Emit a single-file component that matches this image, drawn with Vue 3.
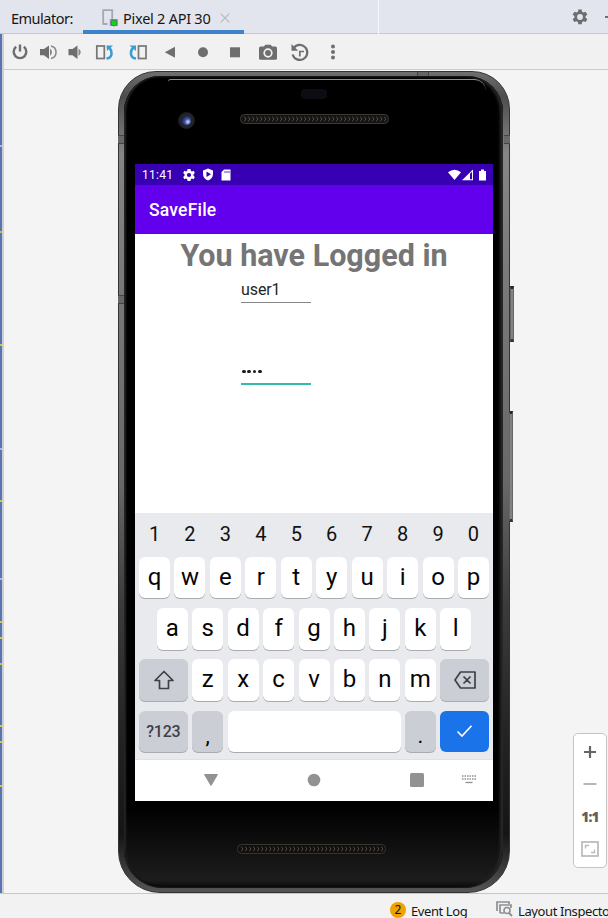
<script setup>
const numbers = '1234567890'.split('')
const rowOne = 'qwertyuiop'.split('')
const rowTwo = 'asdfghjkl'.split('')
const rowThree = 'zxcvbnm'.split('')
const marks = [
  { y: 111, c: '#aeb8dc' }, { y: 197, c: '#c9be3c' }, { y: 310, c: '#d8c72c' }, { y: 414, c: '#aeb8dc' },
  { y: 466, c: '#d8c72c' }, { y: 544, c: '#aeb8dc' }, { y: 587, c: '#d8c72c' }, { y: 603, c: '#d8c72c' },
  { y: 629, c: '#d8c72c' }, { y: 691, c: '#d8c72c' }, { y: 707, c: '#d8c72c' }, { y: 751, c: '#d8c72c' },
]
</script>

<template>
  <div class="window">
    <header class="tabs">
      <span class="title">Emulator:</span>
      <div class="tab">
        <svg class="device" width="17" height="18" viewBox="0 0 17 18">
          <path d="M1.2 14.5V1.2h9V11" fill="none" stroke="#a4a9b0" stroke-width="1.8" />
          <path d="M.5 14h5v2h-5z" fill="#a4a9b0" />
          <rect x="7.8" y="10" width="8" height="7" fill="#9a83b8" />
          <circle cx="12" cy="14" r="3" fill="#10d51b" stroke="#24852b" stroke-width=".7" />
        </svg>
        <span class="tab-name">Pixel 2 API 30</span>
        <svg class="close" width="10" height="10" viewBox="0 0 10 10"><path d="M.7.7l8.6 8.6M9.3.7L.7 9.3" stroke="#b5b9c1" stroke-width="1.2" /></svg>
      </div>
      <div class="divider"></div>
      <svg class="gear" width="16" height="16" viewBox="2 1.300 20 20"><path fill="#6c6e71" fill-rule="evenodd" d="M9.9 2h4.2l.5 2.8 1.8 1 2.7-1 2.1 3.6-2.2 1.8v2.1l2.2 1.8-2.1 3.6-2.7-1-1.8 1-.5 2.8H9.9l-.5-2.800-1.800-1-2.700 1-2.100-3.600L5 12.300v-2.100L2.800 8.400l2.100-3.600 2.700 1 1.800-1zM12 7.600a3.700 3.700 0 1 0 0 7.400 3.700 3.700 0 0 0 0-7.400z" /></svg>
      <svg class="minimize" width="4" height="4" viewBox="0 0 4 4"><path d="M1 2h3" stroke="#6c6e71" stroke-width="2" /></svg>
    </header>

    <main class="body">
      <div class="strip">
        <i v-for="m in marks" :key="m.y" class="mark" :style="{ top: m.y + 'px', background: m.c }"></i>
      </div>
      <section class="panel">
        <nav class="toolbar">
          <svg viewBox="0 0 20 20"><path d="M6.200 4.800a6.300 6.300 0 1 0 7.600 0M10 2.500v7" fill="none" stroke="#6c6e70" stroke-width="2.400" /></svg>
          <svg viewBox="0 0 20 20"><path d="M1 7h4L10 3.500V17L5 13.200H1z" fill="#6c6e70" /><path d="M11 6.500q4 3.500 0 7.500z" fill="#858789" /><path d="M12 4a6.400 6.400 0 0 1 0 12.500" fill="none" stroke="#858789" stroke-width="1.500" /></svg>
          <svg viewBox="0 0 20 20"><path d="M3.500 7h4l5-3.500V17l-5-3.800h-4z" fill="#6c6e70" /><path d="M13.500 6.500q4.500 3.500 0 7.500z" fill="#858789" /></svg>
          <svg viewBox="0 0 20 20"><rect x="1.800" y="4" width="7.500" height="12.500" fill="none" stroke="#747678" stroke-width="1.700" /><path d="M11.500 16.500c7-1 5.500-8 3-10.500" fill="none" stroke="#3a9cd3" stroke-width="2.500" /><path d="M11.500 3.500h6.500L12 9z" fill="#3a9cd3" /></svg>
          <svg viewBox="0 0 20 20"><rect x="10.500" y="4" width="7.500" height="12.500" fill="none" stroke="#747678" stroke-width="1.700" /><path d="M8 16.500c-7-1-5.500-8-3-10.500" fill="none" stroke="#3a9cd3" stroke-width="2.500" /><path d="M8 3.500v5.500L1.500 3.500z" fill="#3a9cd3" /></svg>
          <svg viewBox="0 0 20 20"><path d="M4.800 10.200L15 4.700v11z" fill="#6c6e70" /></svg>
          <svg viewBox="0 0 20 20"><circle cx="10" cy="10.200" r="5" fill="#6c6e70" /></svg>
          <svg viewBox="0 0 20 20"><rect x="5" y="5.300" width="10" height="10" fill="#6c6e70" /></svg>
          <svg viewBox="0 0 20 20"><rect x="1" y="4.500" width="18" height="13.300" rx="1.500" fill="#6c6e70" /><path d="M5.500 5L7.300 2.700h5.400L14.500 5z" fill="#6c6e70" /><circle cx="10" cy="11" r="3.800" fill="#6c6e70" stroke="#f2f2f2" stroke-width="1.700" /></svg>
          <svg viewBox="0 0 20 20"><path d="M3.400 6.500a7.500 7.500 0 1 1-.8 6" fill="none" stroke="#6c6e70" stroke-width="2.200" /><path d="M1.500 2v6.700h6.700z" fill="#6c6e70" /><path d="M14 9.500H9.800v5" fill="none" stroke="#6c6e70" stroke-width="1.700" /></svg>
          <svg viewBox="0 0 20 20"><g fill="#6c6e70"><circle cx="10" cy="4.500" r="2" /><circle cx="10" cy="10" r="2" /><circle cx="10" cy="15.500" r="2" /></g></svg>
        </nav>

        <div class="stage">
          <div class="phone">
            <i class="seam top"></i><i class="seam left"></i><i class="seam mid"></i><i class="seam right"></i>
            <i class="button power"></i><i class="button volume"></i>
            <div class="glass">
              <i class="shine"></i>
              <div class="forehead">
                <div class="camera"><i></i></div>
                <div class="sensor"></div>
                <svg class="speaker" width="149" height="10">
                  <defs><pattern id="mesh" width="4" height="10" patternUnits="userSpaceOnUse"><path d="M0 2.500l2 2.500-2 2.500" fill="none" stroke="#5b544b" stroke-width=".9" /></pattern></defs>
                  <rect x=".5" y=".5" width="148" height="9" rx="4" fill="#151412" stroke="#3e3933" /><rect x="3" y="1" width="143" height="8" fill="url(#mesh)" />
                </svg>
              </div>

              <div class="screen">
                <div class="status">
                  <span class="clock">11:41</span>
                  <svg width="12" height="12" viewBox="2 2 20 20"><path fill="#fff" fill-rule="evenodd" d="M9.500 2h5l.5 3 2 1 2.700-1 2 3.800-2.200 2v2.400l2.200 2-2 3.800-2.700-1-2 1-.5 3h-5L9 19l-2-1-2.700 1-2-3.800 2.200-2v-2.400l-2.200-2L4.300 5 7 6l2-1zM12 8.500a3.500 3.500 0 1 0 0 7 3.500 3.500 0 0 0 0-7z" /></svg>
                  <svg width="12" height="13" viewBox="0 0 12 13"><path d="M6 .5L11 2.500V6c0 3-2 5.500-5 6.500C3 11.500 1 9 1 6V2.500z" fill="#fff" /><path d="M4.500 3.500v5.400L9 6.200z" fill="#3700b3" /></svg>
                  <svg width="10" height="12" viewBox="0 0 10 12"><path d="M3 .5h6.500v11H.5V3z" fill="#fff" /><path d="M4 2v2M6 2v2M8 2v2" stroke="#3700b3" stroke-width=".8" /></svg>
                  <svg class="signals" width="39" height="12" viewBox="0 0 39 12"><g fill="#fff"><path d="M0 3.300Q6.500-2 13 3.300L6.500 11z" /><path d="M14 11.200L25 .5v10.700z" /><path d="M31 2h2V.5h3V2h2v9.500h-7z" /></g><path d="M22 4.800L24 2.800v7.400h-2z" fill="#3700b3" /></svg>
                </div>
                <div class="appbar">SaveFile</div>
                <div class="content">
                  <h1>You have Logged in</h1>
                  <div class="field">user1</div>
                  <div class="field secret"><i v-for="n in 4" :key="n"></i></div>
                </div>
                <div class="keyboard">
                  <div class="row digits"><span v-for="k in numbers" :key="k">{{ k }}</span></div>
                  <div class="row"><span v-for="k in rowOne" :key="k" class="key">{{ k }}</span></div>
                  <div class="row"><span v-for="k in rowTwo" :key="k" class="key">{{ k }}</span></div>
                  <div class="row">
                    <span class="key gray wide"><svg width="22" height="22" viewBox="0 0 22 22"><path d="M11 2.500L2 11.500h4.500v8h9v-8H20z" fill="none" stroke="#3e4146" stroke-width="1.700" stroke-linejoin="round" /></svg></span>
                    <span v-for="k in rowThree" :key="k" class="key">{{ k }}</span>
                    <span class="key gray wide"><svg width="22" height="20" viewBox="0 0 22 20"><path d="M6.500 2H21v16H6.500L1 10zM9.500 6.500l7 7M16.500 6.500l-7 7" fill="none" stroke="#3e4146" stroke-width="1.700" stroke-linejoin="round" /></svg></span>
                  </div>
                  <div class="row">
                    <span class="key gray wide sym">?123</span>
                    <span class="key gray punct">,</span>
                    <span class="key space"></span>
                    <span class="key gray punct">.</span>
                    <span class="key wide enter"><svg width="17" height="14" viewBox="0 0 17 14"><path d="M1.500 7.500L6 12 15.500 1.800" fill="none" stroke="#fff" stroke-width="1.600" /></svg></span>
                  </div>
                </div>
                <div class="navbar">
                  <svg width="16" height="14" viewBox="0 0 16 14"><path d="M1.500 1.500h13L8 12.500z" fill="#929292" stroke="#929292" stroke-linejoin="round" /></svg>
                  <svg width="14" height="14" viewBox="0 0 14 14"><circle cx="7" cy="7" r="6.300" fill="#929292" /></svg>
                  <svg width="14" height="14" viewBox="0 0 14 14"><rect width="14" height="14" rx="1.500" fill="#929292" /></svg>
                  <svg width="14" height="9" viewBox="0 0 14 9"><path d="M0 1h14M0 4h14" stroke="#8e8e8e" stroke-width="1.500" stroke-dasharray="1.500 1" /><path d="M3.500 7.500h7" stroke="#8e8e8e" stroke-width="1.300" /></svg>
                </div>
              </div>

              <div class="chin">
                <svg width="149" height="10"><rect x=".5" y=".5" width="148" height="9" rx="4" fill="#11100f" stroke="#38342f" /><rect x="3" y="1" width="143" height="8" fill="url(#mesh)" /></svg>
              </div>
            </div>
          </div>

          <div class="zoom">
            <svg width="14" height="14" viewBox="0 0 14 14"><path d="M1 7h12M7 1v12" stroke="#666" stroke-width="2.200" /></svg>
            <svg width="14" height="14" viewBox="0 0 14 14"><path d="M.500 7h13" stroke="#b6b6b6" stroke-width="2" /></svg>
            <span>1:1</span>
            <svg width="18" height="16" viewBox="0 0 18 16"><rect x="1" y="1" width="16" height="14" fill="none" stroke="#b9b9b9" stroke-width="1.700" /><path d="M4.500 7.500V4.500H8M13.500 8.500v3H10" fill="none" stroke="#b9b9b9" stroke-width="1.300" /></svg>
          </div>
        </div>
      </section>
    </main>

    <footer class="footer">
      <span class="badge">2</span>
      <span class="log">Event Log</span>
      <svg width="17" height="16" viewBox="0 0 17 16"><path d="M1 10V1h12v2M4 12V4h11v3M4 12h4" fill="none" stroke="#8d9094" stroke-width="1.700" /><circle cx="11" cy="9.500" r="3" fill="none" stroke="#8d9094" stroke-width="1.600" /><path d="M13 12l3 3" stroke="#8d9094" stroke-width="2" /></svg>
      <span class="inspector">Layout Inspector</span>
    </footer>
  </div>
</template>

<style>
body { margin: 0; overflow: hidden; }
</style>

<style scoped>
* { box-sizing: border-box; }
i { display: block; }
svg { display: block; flex: none; }
.window { width: 608px; height: 918px; overflow: hidden; display: flex; flex-direction: column; background: #f2f2f2; font-family: "Noto Sans", "Open Sans", sans-serif; font-size: 14.500px; color: #161616; }
.tabs { height: 34px; flex: none; display: flex; background: #e2e5ed; border-bottom: 1px solid #c6c8d0; align-items: center; }
.title { width: 83px; padding-left: 11px; white-space: nowrap; letter-spacing: -.5px; padding-top: 2px; }
.tab { width: 161px; height: 34px; margin-bottom: -1px; border-bottom: 4px solid #3e82c9; display: flex; align-items: center; padding: 5px 0 0 19px; flex: none; }
.device { margin-right: 4px; }
.tab-name { width: 94px; white-space: nowrap; letter-spacing: -.25px; }
.close { margin-left: 3px; }
.divider { width: 135px; height: 34px; border-right: 1px solid #f5f6f9; }
.gear { margin-left: 193px; }
.minimize { margin-left: auto; }
.body { height: 860px; flex: none; display: flex; border-bottom: 1px solid #c8c8c8; }
.strip { position: relative; width: 4px; background: #5874b1; border-right: 2px solid #cdcfd4; }
.mark { position: absolute; left: 0; width: 2px; height: 2px; }
.panel { flex: 1; background: #f4f4f4; }
.toolbar { height: 36px; display: flex; align-items: center; background: #f1f1f1; border-bottom: 1px solid #cbcbcb; padding-left: 6px; }
.toolbar svg { width: 20px; height: 20px; }
.toolbar svg:nth-child(2) { margin-left: 9px; }
.toolbar svg:nth-child(3) { margin-left: 6px; }
.toolbar svg:nth-child(4) { margin-left: 10px; }
.toolbar svg:nth-child(5) { margin-left: 13px; }
.toolbar svg:nth-child(6) { margin-left: 12px; }
.toolbar svg:nth-child(n+7) { margin-left: 12.500px; }
.stage { height: 823px; padding: 1px 1px 0 114px; display: flex; align-items: flex-start; }
.phone { position: relative; width: 392px; height: 822px; flex: none; padding: 4px 6px 4px 5px; border-radius: 38px 38px 42px 42px; background: linear-gradient(#6d6f6f 0, #4c4e4e 3%, #858585 10%, #767676 30%, #686868 50%, #3b3b3b 65%, #242424 80%, #151515 93%, #555 100%); border: 1px solid #333; }
.glass { position: relative; height: 100%; border-radius: 36px 36px 38px 38px; background: linear-gradient(#000 90%, #1d1d1d 99%, #080808); padding: 88px 0 0 11px; box-shadow: inset 2px 0 2px #252525, inset -3px 0 3px #292929, inset 0 0 0 2px #050505; }
.shine { position: absolute; left: 44px; right: 17px; top: 3px; height: 12px; border-top: 1.500px solid #8c9292; border-radius: 6px 26px 0 0; }
.forehead { position: absolute; left: 0; top: 0; width: 100%; }
.camera { position: absolute; left: 54px; top: 36px; width: 17px; height: 17px; border-radius: 50%; background: #23242b; border: 1px solid #1b1c20; padding: 3px; }
.camera i { width: 9px; height: 9px; border-radius: 50%; background: radial-gradient(circle at 65% 65%, #b4bff8 10%, #3c4f9d 38%, #131d45 85%); }
.sensor { position: absolute; left: 177px; top: 13px; width: 26px; height: 10px; border-radius: 4px; background: #0c0d12; }
.speaker { position: absolute; left: 116px; top: 38px; }
.seam { position: absolute; background: #686868; border: 0 solid #444; border-width: 1px 0; }
.seam.top { left: 298px; top: 0; width: 12px; height: 4px; border-width: 0 1px; background: #626464; }
.seam.left { left: -1px; top: 63px; width: 6px; height: 9px; }
.seam.mid { left: -1px; top: 223px; width: 6px; height: 9px; }
.seam.right { right: -1px; top: 63px; width: 6px; height: 9px; }
.button { position: absolute; right: -5px; width: 4px; background: #828282; border: 1px solid #666; border-top: 3px solid #272727; border-bottom: 3px solid #333; }
.power { top: 214px; height: 56px; }
.volume { top: 339px; height: 111px; right: -4px; }
.screen { width: 358px; height: 637px; background: #fff; font-family: Roboto, sans-serif; }
.status { height: 21px; background: #3700b3; color: #fff; display: flex; align-items: center; padding-left: 7px; font-size: 12px; }
.clock { width: 40.500px; letter-spacing: .25px; padding-top: 1px; }
.status svg { margin-right: 7px; }
.status .signals { margin: 0 6px 0 auto; }
.appbar { height: 49px; background: #6200ee; color: #fff; font-weight: 500; font-size: 17.500px; line-height: 50px; padding-left: 14px; letter-spacing: .2px; }
.content { height: 279px; display: flex; flex-direction: column; }
h1 { margin: 4px 0 0; text-align: center; font-size: 30.500px; line-height: 36px; font-weight: 700; color: #757575; white-space: nowrap; }
.field { margin-left: 106px; width: 70px; height: 29px; border-bottom: 1px solid #858585; font-size: 16px; line-height: 32px; color: #252525; letter-spacing: -.1px; }
.secret { margin-top: 53px; border-bottom: 2px solid #35bbad; display: flex; gap: 1.800px; padding: 13.500px 0 0 1px; }
.secret i { width: 3.600px; height: 3.600px; border-radius: 50%; background: #1b1b1b; }
.keyboard { height: 247px; background: #e8eaed; border-bottom: 1px solid #dfe1e4; padding: 0 4px; display: flex; flex-direction: column; gap: 9.800px; }
.row { display: flex; justify-content: center; gap: 4.450px; flex: none; }
.digits { height: 34px; font-size: 20px; line-height: 42px; color: #111; }
.digits span { width: 31px; text-align: center; }
.key { width: 31px; height: 41.500px; flex: none; border-radius: 6px; background: #fff; box-shadow: 0 1px 0 #a9abb0; font-size: 24px; line-height: 41px; text-align: center; color: #050505; }
.gray { background: #cbced5; }
.wide { width: 48.500px; display: flex; align-items: center; justify-content: center; }
.sym { font-size: 16px; font-weight: 500; color: #3e4146; letter-spacing: -.2px; }
.punct { line-height: 49px; font-size: 22px; }
.space { width: 173px; }
.enter { background: #1a73e8; box-shadow: none; }
.navbar { height: 39px; display: flex; align-items: center; padding-left: 67.500px; }
.navbar svg:nth-child(2) { margin-left: 88.500px; }
.navbar svg:nth-child(3) { margin-left: 89px; }
.navbar svg:nth-child(4) { margin-left: 38px; }
.chin { padding: 43px 0 0 102px; }
.zoom { width: 34px; height: 135px; margin: 662px 0 0 auto; border: 1px solid #c4c4c4; border-radius: 5px; background: #fff; display: flex; flex-direction: column; align-items: center; padding-top: 11px; flex: none; }
.zoom svg:nth-child(2) { margin-top: 18px; }
.zoom span { margin-top: 15px; height: 22px; line-height: 22px; font-size: 13.500px; font-weight: 800; color: #606060; letter-spacing: -.7px; font-family: "Open Sans", sans-serif; }
.zoom svg:last-child { margin-top: 13px; }
.footer { height: 24px; flex: none; display: flex; align-items: flex-start; padding-left: 390px; white-space: nowrap; background: #f2f2f2; line-height: 18px; }
.badge { width: 16px; height: 16px; margin-top: 8px; border-radius: 50%; background: #eda200; text-align: center; line-height: 16px; font-size: 12px; flex: none; }
.log { width: 85px; flex: none; padding: 8px 0 0 5px; font-size: 13px; letter-spacing: -.4px; }
.footer svg { margin: 7px 0 0 5px; }
.inspector { padding: 8px 0 0 5px; font-size: 13px; letter-spacing: -.4px; }
</style>
